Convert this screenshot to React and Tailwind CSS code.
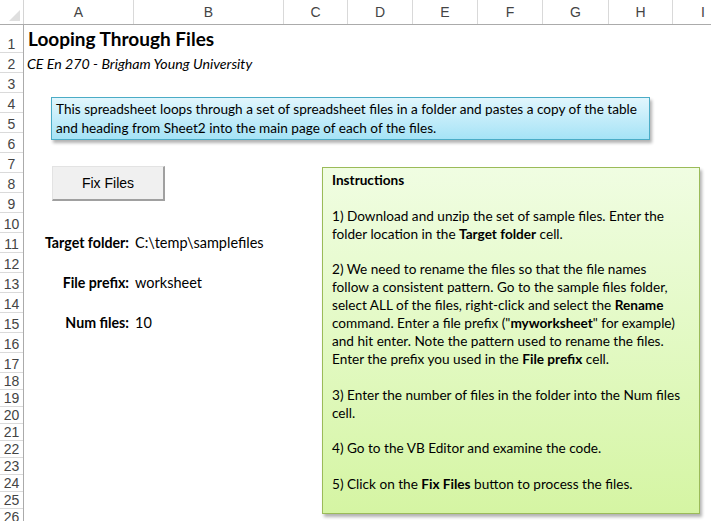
import React from 'react';

const COLS = [
  ['A', 109], ['B', 149], ['C', 63], ['D', 64], ['E', 64],
  ['F', 64], ['G', 65], ['H', 63], ['I', 60],
];

const ROWS = [28, 20, ...Array(15).fill(20), ...Array(8).fill(17), 17];

const body = { fontFamily: 'Lato, "Open Sans", sans-serif' };
const arial = { fontFamily: '"Liberation Sans", Arial, sans-serif' };

const cells = {
  1: { a: <span className="text-[19px] font-bold text-black pl-[4px]">Looping Through Files</span> },
  2: { a: <span className="text-[14.2px] italic text-black pl-[3px]">CE En 270 - Brigham Young University</span> },
  11: { label: 'Target folder:', value: 'C:\\temp\\samplefiles' },
  13: { label: 'File prefix:', value: 'worksheet' },
  15: { label: 'Num files:', value: '10' },
};

const SheetRow = ({ n, h }) => {
  const c = cells[n] || {};
  return (
    <div className="flex items-center" style={{ height: h }}>
      <div className="w-[109px] shrink-0 flex justify-end pr-[4px] whitespace-nowrap overflow-visible">
        {c.a ? <div className="w-full">{c.a}</div> : null}
        {c.label ? <span className="text-[14.2px] font-bold text-black">{c.label}</span> : null}
      </div>
      <div className="pl-[2px] whitespace-nowrap text-[14.5px] text-black">{c.value}</div>
    </div>
  );
};

const instructions = [
  [<b>Instructions</b>],
  [],
  ['1) Download and unzip the set of sample files. Enter the'],
  ['folder location in the ', <b>Target folder</b>, ' cell.'],
  [],
  ['2) We need to rename the files so that the file names'],
  ['follow a consistent pattern. Go to the sample files folder,'],
  ['select ALL of the files, right-click and select the ', <b>Rename</b>],
  ['command. Enter a file prefix ("', <b>myworksheet</b>, '" for example)'],
  ['and hit enter. Note the pattern used to rename the files.'],
  ['Enter the prefix you used in the ', <b>File prefix</b>, ' cell.'],
  [],
  ['3) Enter the number of files in the folder into the Num files'],
  ['cell.'],
  [],
  ['4) Go to the VB Editor and examine the code.'],
  [],
  ['5) Click on the ', <b>Fix Files</b>, ' button to process the files.'],
];

export default function App() {
  return (
    <div className="w-[711px] h-[521px] overflow-hidden bg-white relative" style={body}>
      {/* column header */}
      <div className="flex h-[25px] border-b border-[#ababab] bg-white" style={arial}>
        <div className="w-[24px] shrink-0 border-r border-[#d4d4d4] relative">
          <svg className="absolute right-[3px] bottom-[3px]" width="11" height="11" viewBox="0 0 11 11">
            <polygon points="11,0 11,11 0,11" fill="#dfdfdf" />
          </svg>
        </div>
        {COLS.map(([l, w]) => (
          <div
            key={l}
            className="shrink-0 border-r border-[#d9d9d9] flex items-center justify-center text-[14px] text-[#444]"
            style={{ width: w + 1 }}
          >
            {l}
          </div>
        ))}
      </div>

      <div className="flex">
        {/* row header */}
        <div className="w-[24px] shrink-0 border-r border-[#ababab]" style={arial}>
          {ROWS.map((h, i) => (
            <div
              key={i}
              className="border-b border-[#dadada] flex items-end justify-center pb-[1px] text-[14px] text-[#444] leading-none"
              style={{ height: h }}
            >
              {i + 1}
            </div>
          ))}
        </div>

        {/* sheet */}
        <div className="flex-1 relative">
          {ROWS.map((h, i) => (
            <SheetRow key={i} n={i + 1} h={h} />
          ))}

          {/* description shape */}
          <div
            className="absolute left-[27px] top-[72px] w-[599px] h-[43px] border border-[#4bacc6] bg-gradient-to-b from-[#e1f6fd] to-[#a5e3f6] shadow-[2px_3px_3px_rgba(0,0,0,0.3)] pl-[4px] pt-[2px] text-[13.6px] leading-[19px] text-black whitespace-nowrap"
          >
            <div>This spreadsheet loops through a set of spreadsheet files in a folder and pastes a copy of the table</div>
            <div>and heading from Sheet2 into the main page of each of the files.</div>
          </div>

          {/* button */}
          <div
            className="absolute left-[28px] top-[141px] w-[113px] h-[35px] bg-[#f0f0f0] border-t border-l border-[#e3e3e3] border-r-2 border-b-2 border-r-[#a0a0a0] border-b-[#a0a0a0] flex items-center justify-center text-[14px] text-black"
            style={arial}
          >
            Fix Files
          </div>

          {/* instructions shape */}
          <div
            className="absolute left-[298px] top-[142px] w-[378px] h-[347px] border border-[#9bbb59] bg-gradient-to-b from-[#f0fde2] to-[#d5f5a3] shadow-[2px_3px_3px_rgba(0,0,0,0.3)] pl-[9px] pt-[4px] text-[13.6px] leading-[17.9px] text-black whitespace-nowrap"
          >
            {instructions.map((line, i) => (
              <div key={i} className="h-[17.9px]">
                {line.map((part, j) => (
                  <React.Fragment key={j}>{part}</React.Fragment>
                ))}
              </div>
            ))}
          </div>
        </div>
      </div>
    </div>
  );
}
